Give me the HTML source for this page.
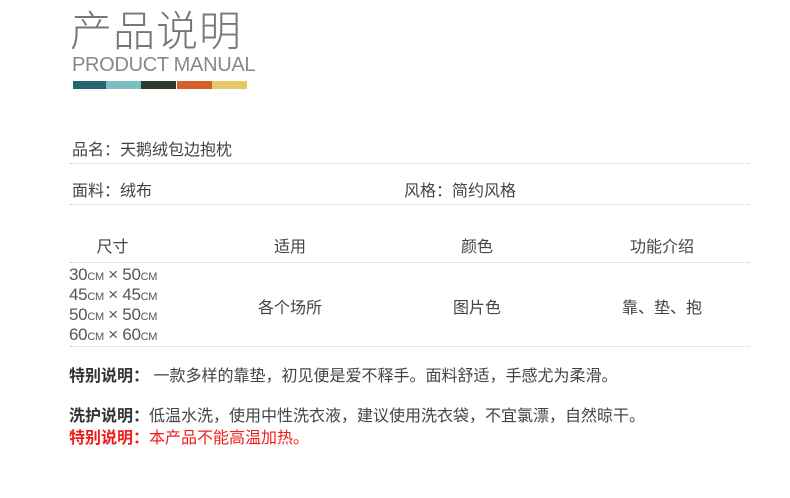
<!DOCTYPE html>
<html><head><meta charset="utf-8"><style>
*{margin:0;padding:0;box-sizing:border-box}
body{width:790px;height:498px;background:#fff;position:relative;overflow:hidden;font-family:"Liberation Sans","Noto Sans CJK SC",sans-serif;color:#444}
.a{position:absolute;white-space:nowrap}
.line{position:absolute;left:70px;width:680px;border-top:1px dotted #ccc}
.bar{position:absolute;top:81px;height:8px}
.t{font-size:16px}
.c{text-align:center}
.s{position:absolute;left:69px;font-size:17px;line-height:18px;color:#555;letter-spacing:-0.3px;white-space:nowrap}
.s small{font-size:11px;line-height:0}
</style></head><body>
<div class="a" style="left:70px;top:-2px;font-size:42px;color:#777;font-weight:200;letter-spacing:1px;font-family:'Noto Sans CJK SC',sans-serif">产品说明</div>
<div class="a" style="left:72px;top:54px;font-size:20px;color:#888;letter-spacing:-0.3px">PRODUCT MANUAL</div>
<div class="bar" style="left:73px;width:33px;background:#246670"></div>
<div class="bar" style="left:106px;width:35px;background:#7bbfc3"></div>
<div class="bar" style="left:141px;width:35px;background:#2b3b30"></div>
<div class="bar" style="left:177px;width:35px;background:#d6602a"></div>
<div class="bar" style="left:212px;width:35px;background:#e6c865"></div>

<div class="a t" style="left:72px;top:136px">品名：天鹅绒包边抱枕</div>
<div class="line" style="top:163px"></div>
<div class="a t" style="left:72px;top:177px">面料：绒布</div>
<div class="a t" style="left:404px;top:177px">风格：简约风格</div>
<div class="line" style="top:204px"></div>

<div class="a t c" style="left:70px;width:85px;top:233px">尺寸</div>
<div class="a t c" style="left:240px;width:100px;top:233px">适用</div>
<div class="a t c" style="left:427px;width:100px;top:233px">颜色</div>
<div class="a t c" style="left:612px;width:100px;top:233px">功能介绍</div>
<div class="line" style="top:262px"></div>
<div class="s" style="top:266px">30<small>CM</small> × 50<small>CM</small></div>
<div class="s" style="top:286px">45<small>CM</small> × 45<small>CM</small></div>
<div class="s" style="top:306px">50<small>CM</small> × 50<small>CM</small></div>
<div class="s" style="top:326px">60<small>CM</small> × 60<small>CM</small></div>
<div class="a t c" style="left:240px;width:100px;top:294px">各个场所</div>
<div class="a t c" style="left:427px;width:100px;top:294px">图片色</div>
<div class="a t c" style="left:612px;width:100px;top:294px">靠、垫、抱</div>
<div class="line" style="top:346px"></div>

<div class="a t" style="left:69px;top:362px"><b style="color:#333">特别说明：</b> 一款多样的靠垫，初见便是爱不释手。面料舒适，手感尤为柔滑。</div>
<div class="a t" style="left:69px;top:402px"><b style="color:#333">洗护说明：</b>低温水洗，使用中性洗衣液，建议使用洗衣袋，不宜氯漂，自然晾干。</div>
<div class="a t" style="left:69px;top:424px;color:#f01c1c"><b>特别说明：</b>本产品不能高温加热。</div>
</body></html>
